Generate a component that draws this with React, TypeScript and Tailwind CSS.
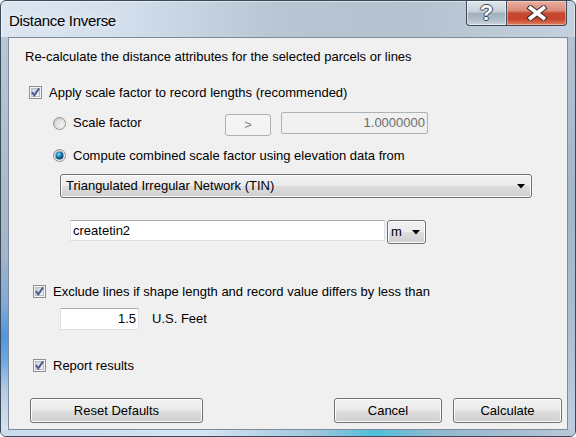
import React, { useId } from 'react';

// Windows 7 style "Distance Inverse" dialog

function CheckBox() {
  const id = useId();
  return (
    <svg width="13" height="13" viewBox="0 0 13 13" className="shrink-0">
      <defs>
        <linearGradient id={`cb${id}`} x1="0" y1="0" x2="1" y2="1">
          <stop offset="0" stopColor="#c9ced6" />
          <stop offset="1" stopColor="#f7f7f7" />
        </linearGradient>
      </defs>
      <rect x="0.5" y="0.5" width="12" height="12" fill="#f6f6f6" stroke="#8e8f8f" />
      <rect x="2.5" y="2.5" width="8" height="8" fill={`url(#cb${id})`} stroke="#b9bdc4" />
      <path d="M2.9 6.2 L5.3 9.4 L10.1 2.4" fill="none" stroke="#4b5c98" strokeWidth="2" />
    </svg>
  );
}

function Radio({ checked }: { checked?: boolean }) {
  const id = useId();
  return (
    <svg width="13" height="13" viewBox="0 0 13 13" className="shrink-0">
      <defs>
        <linearGradient id={`ro${id}`} x1="0" y1="0" x2="1" y2="1">
          <stop offset="0" stopColor="#b5b5b5" />
          <stop offset="1" stopColor="#efefef" />
        </linearGradient>
        <linearGradient id={`ri${id}`} x1="0" y1="0" x2="1" y2="1">
          <stop offset="0" stopColor="#d2d2d2" />
          <stop offset="1" stopColor="#fdfdfd" />
        </linearGradient>
        <radialGradient id={`rd${id}`} cx="0.4" cy="0.35" r="0.7">
          <stop offset="0" stopColor="#a8ecff" />
          <stop offset="0.3" stopColor="#2f9bd4" />
          <stop offset="0.75" stopColor="#135580" />
          <stop offset="1" stopColor="#0c3654" />
        </radialGradient>
      </defs>
      <circle cx="6.5" cy="6.5" r="6" fill={`url(#ri${id})`} stroke="#8e8f8f" />
      <circle cx="6.5" cy="6.5" r="4.6" fill="none" stroke={`url(#ro${id})`} strokeWidth="0.8" />
      {checked && <circle cx="6.5" cy="6.5" r="4" fill={`url(#rd${id})`} />}
    </svg>
  );
}

function Arrow() {
  return (
    <svg width="8" height="5" viewBox="0 0 8 5" className="shrink-0">
      <path d="M0 0 H8 L4 4.5 Z" fill="#000" />
    </svg>
  );
}

function Button({ children, className }: { children: React.ReactNode; className: string }) {
  return (
    <div
      className={`flex h-[25px] items-center justify-center rounded-[3px] border border-[#707070] bg-[linear-gradient(#f2f2f2,#ebebeb_48%,#dddddd_52%,#cfcfcf)] text-[13px] text-black shadow-[inset_0_0_0_1px_#fcfcfc] ${className}`}
    >
      {children}
    </div>
  );
}

export default function App() {
  return (
    <div className="flex h-[437px] w-[576px] flex-col overflow-hidden rounded-[6px] border border-[#3b4a5a] bg-[linear-gradient(90deg,#dbe6f1_0%,#d2deeb_22%,#b8c5d3_48%,#b4c2d0_70%,#c3d1df_100%)] font-['Liberation_Sans',Arial,sans-serif] text-black shadow-[inset_0_0_0_1px_rgba(255,255,255,0.45)]">
      {/* title bar */}
      <div className="flex h-[36px] shrink-0 items-start">
        <div className="ml-[8px] mt-[11px] text-[15px] leading-[18px] tracking-[-0.3px] [text-shadow:0_0_8px_rgba(255,255,255,0.95)]">
          Distance Inverse
        </div>
        <div className="ml-auto mr-[8px] flex">
          <div className="flex h-[25px] w-[41px] items-center justify-center rounded-bl-[4px] border border-t-0 border-[#3d4856] bg-[linear-gradient(#e0e6ec,#c6cfd8_45%,#a3afbb_52%,#b3bfca_80%,#ccd6df)] shadow-[inset_0_0_0_1px_rgba(255,255,255,0.55)]">
            <span className="text-[22px] font-bold leading-none text-white [text-shadow:-1px_0_#3a424c,1px_0_#3a424c,0_-1px_#3a424c,0_1px_#3a424c]">
              ?
            </span>
          </div>
          <div className="flex h-[25px] w-[60px] items-center justify-center rounded-br-[4px] border border-l-0 border-t-0 border-[#3d4856] bg-[linear-gradient(#eab0a2,#da8b79_40%,#c84a34_50%,#c7432a_75%,#e0805f)] shadow-[inset_0_0_0_1px_rgba(255,220,210,0.5)]">
            <svg width="22" height="16" viewBox="0 0 22 16">
              <path d="M4.5 3 L17.5 13 M17.5 3 L4.5 13" stroke="#3a2a28" strokeWidth="5.8" strokeLinecap="square" />
              <path d="M4.5 3 L17.5 13 M17.5 3 L4.5 13" stroke="#ffffff" strokeWidth="3.8" strokeLinecap="square" />
            </svg>
          </div>
        </div>
      </div>

      {/* frame sides + client */}
      <div className="flex shrink-0">
        <div className="w-[7px] bg-[linear-gradient(180deg,#b9c7d5_0%,#a4b5c7_55%,#7fa9d6_68%,#4f96e0_76%,#6aa8e4_82%,#b7cce2_90%,#d6e3ef_100%)]" />
        <div className="flex h-[393px] w-[560px] flex-col border border-[#7c8a99] bg-[#f0f0f0] text-[13px]">
          <div className="ml-[16px] mt-[11px] h-[15px] leading-[15px]">
            Re-calculate the distance attributes for the selected parcels or lines
          </div>

          <div className="ml-[20px] mt-[21px] flex h-[15px] items-center gap-[7px] leading-[15px]">
            <CheckBox />
            <span>Apply scale factor to record lengths (recommended)</span>
          </div>

          <div className="ml-[44px] mt-[12px] flex items-start">
            <div className="flex h-[22px] w-[172px] items-center gap-[7px]">
              <Radio />
              <span>Scale factor</span>
            </div>
            <div className="mt-[2px] flex h-[22px] w-[46px] items-center justify-center rounded-[3px] border border-[#adb2b5] bg-[#f4f4f4] text-[#838383]">
              &gt;
            </div>
            <div className="ml-[10px] flex h-[22px] w-[147px] items-center justify-end rounded-[2px] border border-[#adb2b5] bg-[#f0f0f0] pr-[2px] text-[#6d6d6d]">
              1.0000000
            </div>
          </div>

          <div className="ml-[44px] mt-[12px] flex h-[15px] items-center gap-[7px] leading-[15px]">
            <Radio checked />
            <span>Compute combined scale factor using elevation data from</span>
          </div>

          <div className="ml-[51px] mt-[11px] flex h-[24px] w-[472px] items-center justify-between rounded-[3px] border border-[#707070] bg-[linear-gradient(#f2f2f2,#ebebeb_48%,#dddddd_52%,#cfcfcf)] pl-[5px] pr-[6px] shadow-[inset_0_0_0_1px_#fcfcfc]">
            <span>Triangulated Irregular Network (TIN)</span>
            <Arrow />
          </div>

          <div className="ml-[61px] mt-[22px] flex items-start">
            <div className="flex h-[21px] w-[315px] items-center border border-[#dbdfe6] border-t-[#abadb3] bg-white pl-[2px]">
              createtin2
            </div>
            <div className="ml-[2px] flex h-[24px] w-[39px] items-center justify-between rounded-[3px] border border-[#707070] bg-[linear-gradient(#f2f2f2,#ebebeb_48%,#dddddd_52%,#cfcfcf)] pl-[3px] pr-[5px] shadow-[inset_0_0_0_1px_#fcfcfc]">
              <span>m</span>
              <Arrow />
            </div>
          </div>

          <div className="ml-[24px] mt-[40px] flex h-[15px] items-center gap-[7px] leading-[15px]">
            <CheckBox />
            <span>Exclude lines if shape length and record value differs by less than</span>
          </div>

          <div className="ml-[51px] mt-[9px] flex h-[22px] items-center">
            <div className="flex h-[22px] w-[79px] items-center justify-end border border-[#dbdfe6] border-t-[#abadb3] bg-white pr-[2px]">
              1.5
            </div>
            <span className="ml-[13px]">U.S. Feet</span>
          </div>

          <div className="ml-[24px] mt-[28px] flex h-[15px] items-center gap-[7px] leading-[15px]">
            <CheckBox />
            <span>Report results</span>
          </div>

          <div className="ml-[21px] mr-[5px] mt-[25px] flex items-center">
            <Button className="w-[173px]">Reset Defaults</Button>
            <div className="flex-1" />
            <Button className="w-[108px]">Cancel</Button>
            <Button className="ml-[11px] w-[109px]">Calculate</Button>
          </div>
        </div>
        <div className="w-[7px] bg-[linear-gradient(180deg,#b3c3d3_0%,#a2b6ca_40%,#a9bdd1_70%,#bccde0_100%)]" />
      </div>

      {/* bottom frame */}
      <div className="h-[6px] shrink-0 bg-[linear-gradient(90deg,#c9dbed_0%,#d6e5f3_35%,#9fc6dc_55%,#4fbfd9_65%,#8fb9d0_75%,#a9bed2_90%,#b8c9da_100%)]" />
    </div>
  );
}
